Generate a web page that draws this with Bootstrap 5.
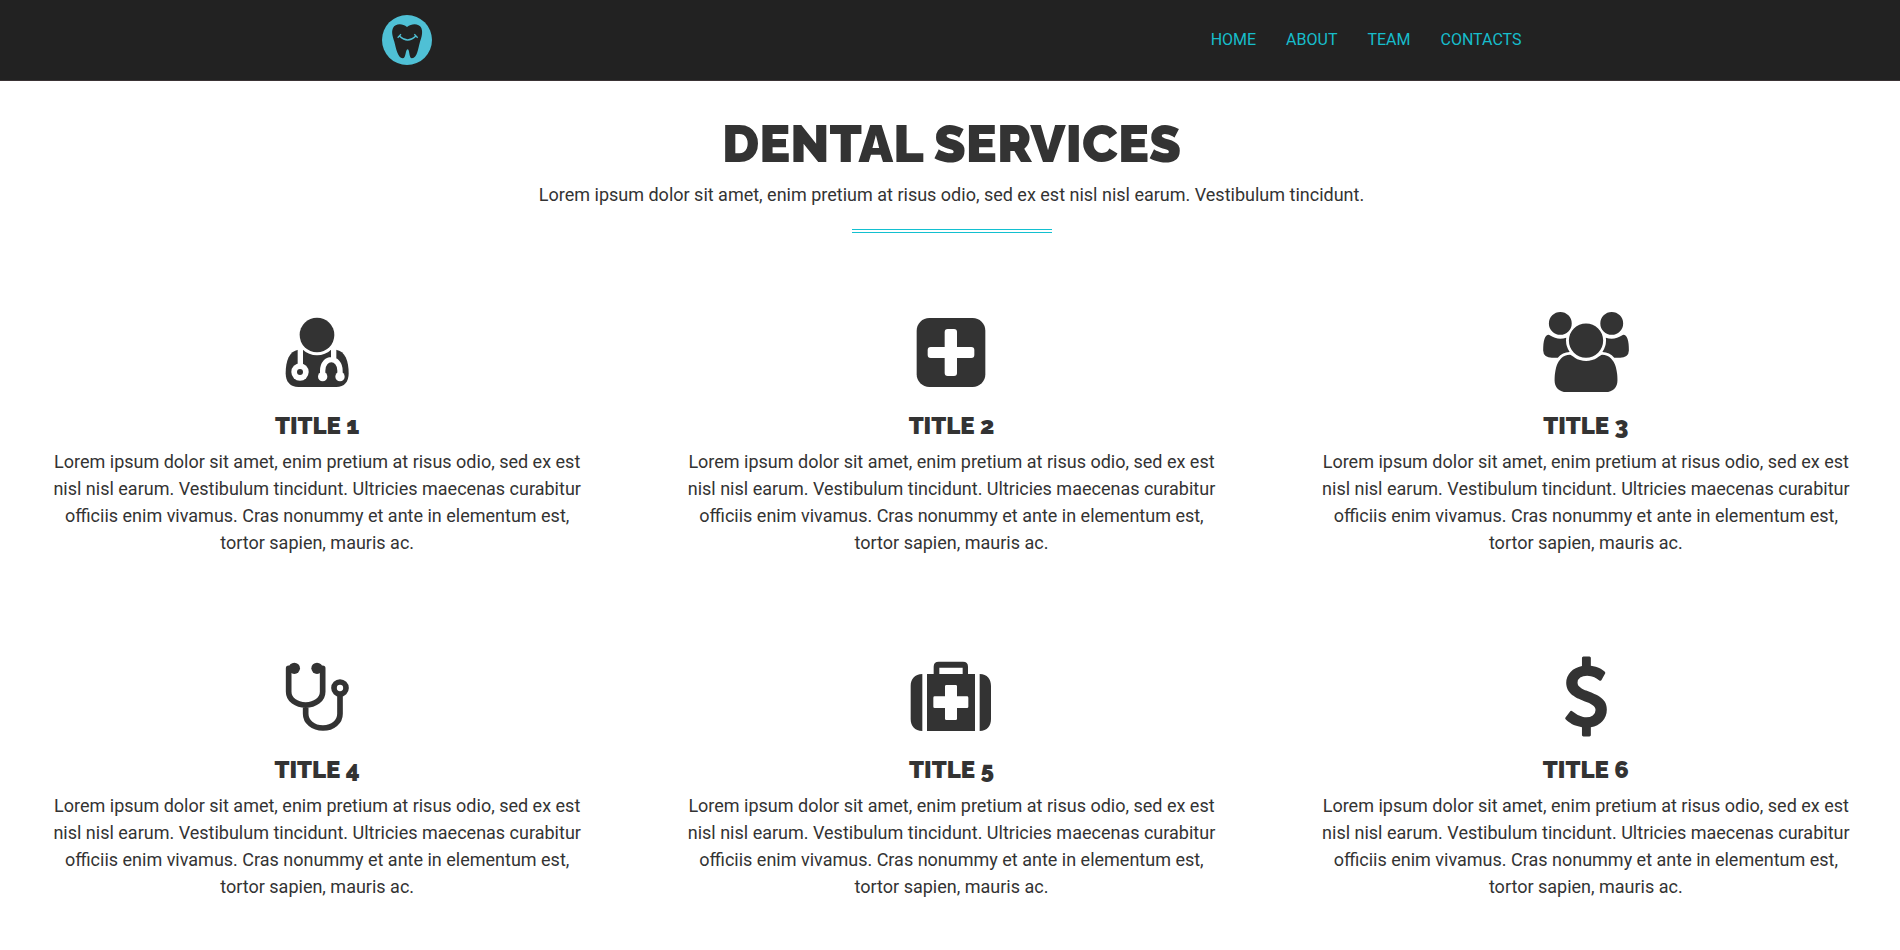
<!DOCTYPE html>
<html lang="en">
<head>
<meta charset="utf-8">
<meta name="viewport" content="width=device-width, initial-scale=1">
<title>Dental Services</title>
<link href="https://cdn.jsdelivr.net/npm/bootstrap@5.3.0/dist/css/bootstrap.min.css" rel="stylesheet">
<style>
body { font-family: Roboto, "Liberation Sans", sans-serif; font-size: 18px; line-height: 27px; color: #333; background: #fff; overflow-x: hidden; }
.page { margin-right: -3px; }
.site-bar { background: #222; border-bottom: 1px solid #3a3335; min-height: 81px; padding: 0; }
.site-bar .container { max-width: 1170px; padding: 0 15px; }
.site-bar .navbar-brand { margin: 0; padding: 0; }
.site-bar .navbar-nav { margin-right: -15px; }
.site-bar .navbar-nav .nav-link { color: #17bdcb; font-size: 16px; line-height: 24px; padding: 8px 15px; }
h1, h2 { font-family: Raleway, Lato, sans-serif; font-weight: 900; font-variant-numeric: oldstyle-nums; margin: 0; }
h1 { font-size: 52px; line-height: 60px; }
h2 { font-size: 24px; line-height: 28px; }
.intro { padding: 33px 15px 0; }
.intro p { margin: 7px 0 21px; }
.divider { width: 200px; height: 4px; border: solid #13c0d0; border-width: 1px 0; }
.service { padding: 0 45px; }
.service svg { display: block; margin: 0 auto 20px; width: 88px; height: 80px; fill: #333; }
.services { padding-top: 79px; row-gap: 100px; }
</style>
</head>
<body>
<div class="page">
<nav class="navbar navbar-expand site-bar">
  <div class="container">
    <a class="navbar-brand" href="#" aria-label="Dental home">
      <svg class="d-block" width="50" height="50" viewBox="0 0 150 150" aria-hidden="true">
        <circle cx="75" cy="75" r="75" fill="#4fc0d5"/>
        <path d="M75 36C61 24 40 25 33 39C27 52 33 66 37 80C42 100 47 128 62 130C73 130 69 105 77 103C84 105 80 130 90 130C106 128 108 102 114 80C119 66 123 52 118 39C111 25 90 24 75 36Z" fill="#222"/>
        <path d="M53 64Q77 86 101 64M47 68L57 58M97 58L107 68" fill="none" stroke="#4fc0d5" stroke-width="4"/>
      </svg>
    </a>
    <ul class="navbar-nav">
      <li class="nav-item"><a class="nav-link" href="#">HOME</a></li>
      <li class="nav-item"><a class="nav-link" href="#">ABOUT</a></li>
      <li class="nav-item"><a class="nav-link" href="#">TEAM</a></li>
      <li class="nav-item"><a class="nav-link" href="#">CONTACTS</a></li>
    </ul>
  </div>
</nav>
<main class="container-fluid p-0 text-center">
  <header class="intro d-flex flex-column align-items-center">
    <h1>DENTAL SERVICES</h1>
    <p>Lorem ipsum dolor sit amet, enim pretium at risus odio, sed ex est nisl nisl earum. Vestibulum tincidunt.</p>
    <div class="divider"></div>
  </header>
  <section class="services row g-0">
    <article class="col-4 service">
      <svg viewBox="40 36 264 240" aria-hidden="true">
        <path d="M116 149C88 153 78 184 78 220C78 246 92 261 116 261H230C254 261 267 246 267 220C267 184 257 153 229 149Z"/>
        <circle cx="172" cy="105" r="61" fill="#fff"/>
        <circle cx="172" cy="105" r="52"/>
        <g fill="none" stroke="#fff" stroke-width="16"><path d="M122 145V196M222 145V178M189 230V212C189 168 241 168 241 212V230"/></g>
        <g fill="#fff"><circle cx="121" cy="216" r="26"/><circle cx="189" cy="230" r="14"/><circle cx="241" cy="230" r="14"/></g>
        <circle cx="121" cy="216" r="9"/>
      </svg>
      <h2>TITLE 1</h2>
      <p class="mt-2 mb-0">Lorem ipsum dolor sit amet, enim pretium at risus odio, sed ex est nisl nisl earum. Vestibulum tincidunt. Ultricies maecenas curabitur officiis enim vivamus. Cras nonummy et ante in elementum est, tortor sapien, mauris ac.</p>
    </article>
    <article class="col-4 service">
      <svg viewBox="53 36 264 240" aria-hidden="true">
        <rect x="82" y="54" width="206" height="207" rx="38"/>
        <g fill="#fff"><rect x="166" y="87" width="37" height="141" rx="9"/><rect x="115" y="141" width="140" height="33" rx="9"/></g>
      </svg>
      <h2>TITLE 2</h2>
      <p class="mt-2 mb-0">Lorem ipsum dolor sit amet, enim pretium at risus odio, sed ex est nisl nisl earum. Vestibulum tincidunt. Ultricies maecenas curabitur officiis enim vivamus. Cras nonummy et ante in elementum est, tortor sapien, mauris ac.</p>
    </article>
    <article class="col-4 service">
      <svg viewBox="38 0 1971 1792" aria-hidden="true">
        <path d="M657 896q-162 5-265 128h-134q-82 0-138-40.5t-56-118.5q0-353 124-353 6 0 43.5 21t97.5 42.5 119 21.5q67 0 133-23-5 37-5 66 0 139 81 256zm1071 637q0 120-73 189.5t-194 69.5h-874q-121 0-194-69.5t-73-189.5q0-53 3.5-103.5t14-109 26.5-108.5 43-97.5 62-81 85.5-53.5 111.5-20q10 0 43 21.5t73 48 107 48 135 21.5 135-21.5 107-48 73-48 43-21.5q61 0 111.5 20t85.5 53.5 62 81 43 97.5 26.5 108.5 14 109 3.5 103.5zm-1024-1277q0 106-75 181t-181 75-181-75-75-181 75-181 181-75 181 75 75 181zm704 384q0 159-112.5 271.5t-271.5 112.5-271.5-112.5-112.5-271.5 112.5-271.5 271.5-112.5 271.5 112.5 112.5 271.5zm576 225q0 78-56 118.5t-138 40.5h-134q-103-123-265-128 81-117 81-256 0-29-5-66 66 23 133 23 59 0 119-21.5t97.5-42.5 43.5-21q124 0 124 353zm-128-609q0 106-75 181t-181 75-181-75-75-181 75-181 181-75 181 75 75 181z"/>
      </svg>
      <h2>TITLE 3</h2>
      <p class="mt-2 mb-0">Lorem ipsum dolor sit amet, enim pretium at risus odio, sed ex est nisl nisl earum. Vestibulum tincidunt. Ultricies maecenas curabitur officiis enim vivamus. Cras nonummy et ante in elementum est, tortor sapien, mauris ac.</p>
    </article>
    <article class="col-4 service">
      <svg viewBox="40 33 264 240" aria-hidden="true">
        <g fill="none" stroke="#333" stroke-width="17"><path d="M87 70V140C87 164 110 180 138 180C166 180 189 164 189 140V70M138 183V206C138 230 160 249 190 249C220 249 241 230 241 206V150" stroke-linecap="round"/><circle cx="241" cy="129" r="18"/></g>
        <circle cx="104" cy="70" r="17"/><circle cx="172" cy="70" r="17"/>
      </svg>
      <h2>TITLE 4</h2>
      <p class="mt-2 mb-0">Lorem ipsum dolor sit amet, enim pretium at risus odio, sed ex est nisl nisl earum. Vestibulum tincidunt. Ultricies maecenas curabitur officiis enim vivamus. Cras nonummy et ante in elementum est, tortor sapien, mauris ac.</p>
    </article>
    <article class="col-4 service">
      <svg viewBox="53 33 264 240" aria-hidden="true">
        <path d="M99 87V258C76 258 64 242 64 222V123C64 103 76 87 99 87ZM271 87C294 87 305 103 305 123V222C305 242 294 258 271 258Z"/>
        <path fill-rule="evenodd" d="M113 87H133V65Q133 50 148 50H221Q236 50 236 65V87H257V258H113ZM150 87H220V68H150Z"/>
        <path fill="#fff" d="M171 120H199Q203 120 203 124V154H233Q237 154 237 158V185Q237 189 233 189H203V221Q203 225 199 225H171Q167 225 167 221V189H136Q132 189 132 185V158Q132 154 136 154H167V124Q167 120 171 120Z"/>
      </svg>
      <h2>TITLE 5</h2>
      <p class="mt-2 mb-0">Lorem ipsum dolor sit amet, enim pretium at risus odio, sed ex est nisl nisl earum. Vestibulum tincidunt. Ultricies maecenas curabitur officiis enim vivamus. Cras nonummy et ante in elementum est, tortor sapien, mauris ac.</p>
    </article>
    <article class="col-4 service">
      <svg viewBox="-90 -11 1971 1792" overflow="visible" aria-hidden="true">
        <path d="M1362 1185q0 153-99.500 263.500t-258.500 136.500v175q0 14-9 23t-23 9h-135q-13 0-22.500-9.500t-9.500-22.500v-175q-66-9-127.500-31t-101.500-44.500-74-48-46.500-37.500-17.500-18q-17-21-2-41l103-135q7-10 23-12 15-2 24 9l2 2q113 99 243 125 37 8 74 8 81 0 142.500-43t61.500-122q0-28-15-53t-33.500-42-58.500-37.500-66-32-80-32.500q-39-16-61.500-25t-61.500-26.500-62.500-31-56.500-35.500-53.500-42.500-43.500-49-35.500-58-21-66.500-8.500-78q0-138 98-242t255-134v-180q0-13 9.500-22.500t22.500-9.500h135q14 0 23 9t9 23v176q57 6 110.500 23t87 33.500 63.500 37.500 39 29 15 14q17 18 5 38l-81 146q-8 15-23 16-14 3-27-7-3-3-14.500-12t-39-26.500-58.500-32-74.500-26-85.500-11.500q-95 0-155 43t-60 111q0 26 8.500 48t29.500 41.500 39.500 33 56 31 60.500 27 70 27.500q53 20 81 31.500t76 35 75.500 42.500 62 50 53 63.500 31.500 76.500 13 94z"/>
      </svg>
      <h2>TITLE 6</h2>
      <p class="mt-2 mb-0">Lorem ipsum dolor sit amet, enim pretium at risus odio, sed ex est nisl nisl earum. Vestibulum tincidunt. Ultricies maecenas curabitur officiis enim vivamus. Cras nonummy et ante in elementum est, tortor sapien, mauris ac.</p>
    </article>
  </section>
</main>
</div>
<script src="https://cdn.jsdelivr.net/npm/bootstrap@5.3.0/dist/js/bootstrap.bundle.min.js"></script>
</body>
</html>
